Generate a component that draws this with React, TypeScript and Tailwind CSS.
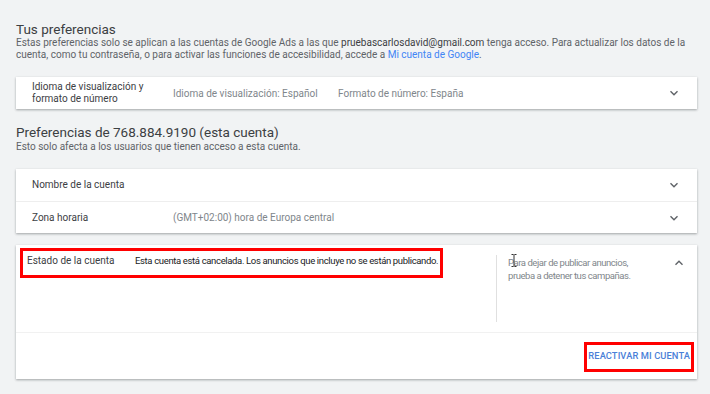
import React from 'react';

const Chevron = ({ up = false }: { up?: boolean }) => (
  <svg width="10" height="10" viewBox="0 0 10 10" className="text-[#5f6368]">
    <path
      d={up ? 'M1.5 6.8 5 3.3l3.5 3.5' : 'M1.5 3.2 5 6.7l3.5-3.5'}
      fill="none"
      stroke="currentColor"
      strokeWidth="1.4"
    />
  </svg>
);

const Card = ({ children, className = '' }: { children: React.ReactNode; className?: string }) => (
  <div className={`bg-white shadow-[0_1px_2px_rgba(60,64,67,0.35),0_1px_3px_rgba(60,64,67,0.12)] ${className}`}>
    {children}
  </div>
);

const Row = ({ label, value, border = false }: { label: React.ReactNode; value?: React.ReactNode; border?: boolean }) => (
  <div className={`flex h-[32px] items-center pl-4 pr-[18px] ${border ? 'border-t border-[#eeeeee]' : ''}`}>
    <div className="w-[141px] text-[10px] leading-[12px] text-[#3c4043]">{label}</div>
    <div className="flex-1 text-[10px] text-[#80868b]">{value}</div>
    <Chevron />
  </div>
);

export default function App() {
  return (
    <div className="min-h-screen bg-[#f1f3f4] pl-4 pr-[13px] pt-[21px] font-['Roboto',sans-serif] text-[#3c4043]">
      <h2 className="text-[13.5px] leading-[16px] text-[#3c4043]">Tus preferencias</h2>
      <p className="text-[10px] leading-[12px] text-[#5f6368]">
        Estas preferencias solo se aplican a las cuentas de Google Ads a las que{' '}
        <span className="text-[#3c4043]">pruebascarlosdavid@gmail.com</span> tenga acceso. Para actualizar los datos de la
        <br />
        cuenta, como tu contraseña, o para activar las funciones de accesibilidad, accede a{' '}
        <span className="text-[#4285f4]">Mi cuenta de Google</span>.
      </p>

      <Card className="mt-[16px]">
        <div className="flex h-[32px] items-center pl-4 pr-[18px]">
          <div className="w-[141px] text-[10px] leading-[12px] text-[#3c4043]">
            Idioma de visualización y
            <br />
            formato de número
          </div>
          <div className="w-[165px] text-[10px] text-[#80868b]">Idioma de visualización: Español</div>
          <div className="flex-1 text-[10px] text-[#80868b]">Formato de número: España</div>
          <Chevron />
        </div>
      </Card>

      <h2 className="mt-[15px] text-[13.5px] leading-[16px] text-[#3c4043]">Preferencias de 768.884.9190 (esta cuenta)</h2>
      <p className="text-[10px] leading-[13px] text-[#5f6368]">Esto solo afecta a los usuarios que tienen acceso a esta cuenta.</p>

      <Card className="mt-[16px]">
        <Row label="Nombre de la cuenta" />
        <Row label="Zona horaria" value="(GMT+02:00) hora de Europa central" border />
      </Card>

      <Card className="relative mt-[12px]">
        <div className="flex h-[87px] pl-[11px] pr-[13px]">
          <div className="flex w-[469px] pt-[10px]">
            <div className="w-[108px] text-[10px] leading-[12px] text-[#3c4043]">Estado de la cuenta</div>
            <div className="text-[9.5px] leading-[12px] tracking-[-0.35px] text-[#202124]">
              Esta cuenta está cancelada. Los anuncios que incluye no se están publicando.
            </div>
          </div>
          <div className="mt-[10px] h-[67px] w-px bg-[#e0e0e0]" />
          <div className="flex-1 pl-[11px] pt-[11px] text-[9.5px] leading-[13px] tracking-[-0.45px] text-[#80868b]">
            Para dejar de publicar anuncios,
            <br />
            prueba a detener tus campañas.
          </div>
          <div className="pt-[13px]">
            <Chevron up />
          </div>
        </div>
        <div className="flex h-[47px] items-center justify-end border-t border-[#f1f1f1] pr-[7px]">
          <button className="text-[9.3px] font-medium tracking-[0.1px] text-[#4a80d8]">REACTIVAR MI CUENTA</button>
        </div>

        <div className="pointer-events-none absolute left-[4px] top-[3px] h-[30px] w-[423px] border-[3px] border-[#ff0000]" />
        <div className="pointer-events-none absolute left-[568px] top-[97px] h-[30px] w-[110px] border-[3px] border-[#ff0000]" />
        <svg className="pointer-events-none absolute left-[495px] top-[9px]" width="6" height="13" viewBox="0 0 6 13">
          <path d="M0.5 0.5h2m1 0h2M3 0.5v12M0.5 12.5h2m1 0h2" stroke="#333" strokeWidth="1" fill="none" />
        </svg>
      </Card>
    </div>
  );
}
